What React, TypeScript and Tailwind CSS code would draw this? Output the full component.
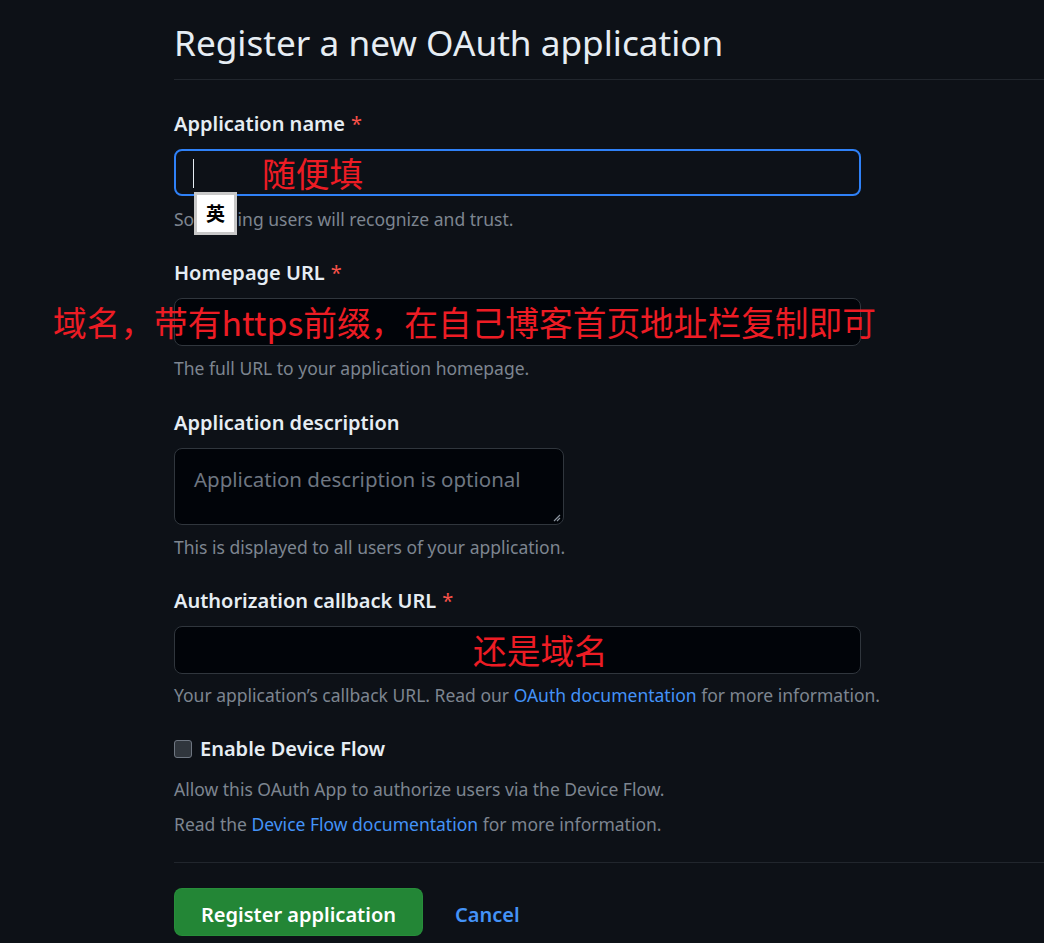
import React from "react";

const font = { fontFamily: '"Noto Sans", "Noto Sans CJK SC", sans-serif' };

const Req = () => <span className="ml-[6px] font-normal text-[#f85149]">*</span>;

const Label = ({ children, mt }: { children: React.ReactNode; mt: string }) => (
  <div className={`${mt} h-[30px] text-[20px] font-semibold leading-[30px] text-[#e6edf3]`}>{children}</div>
);

const Hint = ({ children, mt }: { children: React.ReactNode; mt: string }) => (
  <p className={`${mt} h-[24px] text-[17.5px] leading-[24px] text-[#7d8590]`}>{children}</p>
);

const annot = "absolute whitespace-nowrap text-[33.7px] leading-[40px] text-[#ed1c24] [font-family:'Noto_Sans_CJK_SC',sans-serif]";

export default function App() {
  return (
    <div className="min-h-screen w-full overflow-hidden bg-[#0d1117]" style={font}>
      <div className="pl-[174px]">
        <div className="border-b border-[#21262d] pb-[13px] pt-[18px]">
          <h2 className="h-[48px] text-[35.2px] font-normal leading-[48px] text-[#e6edf3]">
            Register a new OAuth application
          </h2>
        </div>

        <Label mt="mt-[29px]">
          Application name
          <Req />
        </Label>
        <div className="relative mt-[10px] h-[47px] w-[687px] rounded-[8px] border-2 border-[#2f81f7] bg-[#0d1117]">
          <div className="absolute left-[17px] top-[8px] h-[29px] w-px bg-[#e6edf3]" />
          <div className={`${annot} left-[86px] top-[2px]`}>随便填</div>
          <div className="absolute left-[18px] top-[41px] z-10 flex h-[43px] w-[43px] items-center justify-center border-[3px] border-[#c8c8c8] bg-white text-[19px] font-bold text-black [font-family:'Noto_Sans_CJK_SC',sans-serif]">
            英
          </div>
        </div>
        <Hint mt="mt-[11px]">Something users will recognize and trust.</Hint>

        <Label mt="mt-[27px]">
          Homepage URL
          <Req />
        </Label>
        <div className="relative mt-[10px] h-[48px] w-[687px] rounded-[8px] border border-[#30363d] bg-[#010409]">
          <div className={`${annot} left-[-122px] top-[3px]`}>域名，带有https前缀，在自己博客首页地址栏复制即可</div>
        </div>
        <Hint mt="mt-[10px]">The full URL to your application homepage.</Hint>

        <Label mt="mt-[28px]">Application description</Label>
        <div className="relative mt-[10px] h-[77px] w-[390px] rounded-[8px] border border-[#30363d] bg-[#010409] px-[19px] pt-[13px]">
          <span className="text-[20.5px] leading-[34px] text-[#6e7681]">Application description is optional</span>
          <svg className="absolute bottom-[2px] right-[2px]" width="9" height="9" viewBox="0 0 9 9">
            <path d="M8 2 L2 8 M8 5 L5 8" stroke="#8b949e" strokeWidth="1.2" />
          </svg>
        </div>
        <Hint mt="mt-[10px]">This is displayed to all users of your application.</Hint>

        <Label mt="mt-[27px]">
          Authorization callback URL
          <Req />
        </Label>
        <div className="relative mt-[10px] h-[48px] w-[687px] rounded-[8px] border border-[#30363d] bg-[#010409]">
          <div className={`${annot} left-[298px] top-[3px]`}>还是域名</div>
        </div>
        <Hint mt="mt-[9px]">
          Your application’s callback URL. Read our{" "}
          <span className="text-[#4493f8]">OAuth documentation</span> for more information.
        </Hint>

        <div className="mt-[27px] flex h-[30px] items-center gap-[8px]">
          <div className="h-[18px] w-[18px] rounded-[3px] border border-[#6e7681] bg-[#30363d]" />
          <span className="text-[20px] font-semibold leading-[30px] text-[#e6edf3]">Enable Device Flow</span>
        </div>
        <Hint mt="mt-[13px]">Allow this OAuth App to authorize users via the Device Flow.</Hint>
        <Hint mt="mt-[11px]">
          Read the <span className="text-[#4493f8]">Device Flow documentation</span> for more information.
        </Hint>

        <div className="mt-[26px] border-t border-[#21262d]" />

        <div className="mt-[25px] flex items-center gap-[32px]">
          <button className="h-[48px] w-[249px] rounded-[8px] border border-[#2e9a40]/40 bg-[#238636] pt-[5px] text-[20px] font-semibold text-white">
            Register application
          </button>
          <span className="pt-[5px] text-[20px] font-semibold text-[#4493f8]">Cancel</span>
        </div>
      </div>
    </div>
  );
}
